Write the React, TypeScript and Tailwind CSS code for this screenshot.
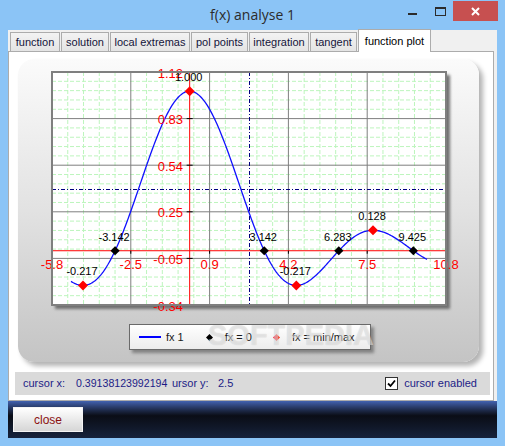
import React from "react";

// plot geometry in page coordinates (svg uses a viewBox offset to the card)
const X0 = -5.8;
const X1 = 10.8;
const Y0 = -0.34;
const Y1 = 1.12;
const L = 52;
const T = 72;
const W = 394;
const H = 233;

const px = (x: number) => L + ((x - X0) / (X1 - X0)) * W;
const py = (y: number) => T + ((Y1 - y) / (Y1 - Y0)) * H;
const sinc = (x: number) => (x === 0 ? 1 : Math.sin(x) / x);

const xLabels = ["-5.8", "-2.5", "0.9", "4.2", "7.5", "10.8"];
const yLabels = ["1.12", "0.83", "0.54", "0.25", "-0.05", "-0.34"];

const zeros = [
  { x: -Math.PI, label: "-3.142" },
  { x: Math.PI, label: "3.142" },
  { x: 2 * Math.PI, label: "6.283" },
  { x: 3 * Math.PI, label: "9.425" },
];
const extremes = [
  { x: -4.4934, label: "-0.217" },
  { x: 0, label: "1.000" },
  { x: 4.4934, label: "-0.217" },
  { x: 7.7253, label: "0.128" },
];

const tabs = [
  { name: "function", w: 50 },
  { name: "solution", w: 48 },
  { name: "local extremas", w: 80 },
  { name: "pol points", w: 57 },
  { name: "integration", w: 60 },
  { name: "tangent", w: 47 },
];

function diamond(cx: number, cy: number, r: number) {
  return `${cx},${cy - r} ${cx + r},${cy} ${cx},${cy + r} ${cx - r},${cy}`;
}

function Chart() {
  const curve: string[] = [];
  for (let x = -5; x <= 10.0001; x += 0.05) {
    curve.push(`${px(x).toFixed(2)},${py(sinc(x)).toFixed(2)}`);
  }
  const minor = Array.from({ length: 24 }, (_, i) => i + 1).filter((i) => i % 5 !== 0);
  const major = [0, 1, 2, 3, 4, 5];
  const ax = px(0);
  const ay = py(0);

  return (
    <svg width={461} height={261} viewBox="18 59 461 261" className="block">
      <defs>
        <filter id="sh" x="-5%" y="-5%" width="115%" height="115%">
          <feGaussianBlur stdDeviation="1.4" />
        </filter>
      </defs>
      <rect x={L + 3} y={T + 3} width={W + 1} height={H + 1} fill="#6e6e6e" filter="url(#sh)" />
      <rect x={L} y={T} width={W} height={H} fill="#ffffff" />

      {minor.map((i) => (
        <line key={"mv" + i} x1={L + (i * W) / 25} y1={T} x2={L + (i * W) / 25} y2={T + H} stroke="#bdf5bd" strokeDasharray="4 2" />
      ))}
      {minor.map((i) => (
        <line key={"mh" + i} x1={L} y1={T + (i * H) / 25} x2={L + W} y2={T + (i * H) / 25} stroke="#bdf5bd" strokeDasharray="4 2" />
      ))}
      {major.map((i) => (
        <line key={"Mv" + i} x1={L + (i * W) / 5} y1={T} x2={L + (i * W) / 5} y2={T + H} stroke="#7f7f7f" />
      ))}
      {major.map((i) => (
        <line key={"Mh" + i} x1={L} y1={T + (i * H) / 5} x2={L + W} y2={T + (i * H) / 5} stroke="#7f7f7f" />
      ))}

      {/* cursor */}
      <line x1={L} y1={189.5} x2={L + W} y2={189.5} stroke="#000080" strokeDasharray="4 2 1 2" />
      <line x1={249.5} y1={T} x2={249.5} y2={T + H} stroke="#000080" strokeDasharray="4 2 1 2" />

      {/* axes */}
      <line x1={ax} y1={T} x2={ax} y2={T + H} stroke="#ff0000" />
      <line x1={L} y1={ay} x2={L + W} y2={ay} stroke="#ff0000" />
      {major.map((i) => (
        <line key={"ty" + i} x1={ax - 3} y1={T + (i * H) / 5} x2={ax + 3} y2={T + (i * H) / 5} stroke="#000" />
      ))}
      {major.map((i) => (
        <line key={"tx" + i} x1={L + (i * W) / 5} y1={ay} x2={L + (i * W) / 5} y2={ay + 3} stroke="#000" />
      ))}

      <polyline points={curve.join(" ")} fill="none" stroke="#1010ff" strokeWidth={1.3} />

      {zeros.map((z) => (
        <polygon key={z.label} points={diamond(px(z.x), py(0), 4.6)} fill="#000" />
      ))}
      {extremes.map((e, i) => (
        <polygon key={"e" + i} points={diamond(px(e.x), py(sinc(e.x)), 5)} fill="#ff0000" />
      ))}

      {/* axis labels */}
      {yLabels.map((l, i) => (
        <text key={"yl" + i} x={183} y={T + (i * H) / 5 + 5.5} textAnchor="end" fontSize={13} fill="#ff0000">
          {l}
        </text>
      ))}
      {xLabels.map((l, i) => (
        <text key={"xl" + i} x={L + (i * W) / 5} y={269} textAnchor="middle" fontSize={13} fill="#ff0000">
          {l}
        </text>
      ))}

      {/* point labels */}
      {zeros.map((z) => (
        <text key={"zl" + z.label} x={px(z.x) - 1} y={py(0) - 10} textAnchor="middle" fontSize={11} fill="#000">
          {z.label}
        </text>
      ))}
      {extremes.map((e, i) => (
        <text key={"el" + i} x={px(e.x) - 1} y={py(sinc(e.x)) - 10} textAnchor="middle" fontSize={11} fill="#000">
          {e.label}
        </text>
      ))}

      <rect x={L} y={T} width={W} height={H} fill="none" stroke="#7f7f7f" strokeWidth={2} />
    </svg>
  );
}

function Legend() {
  return (
    <div className="ml-[111px] mt-[4px] flex h-[26px] w-[242px] items-center border border-[#6a6a6a] bg-gradient-to-b from-[#ffffff] to-[#ececec] text-[11px] text-[#1a1a1a] shadow-[3px_3px_3px_rgba(0,0,0,0.35)]">
      <div className="ml-[9px] h-[2px] w-[22px] bg-[#0000ff]" />
      <span className="ml-[5px]">fx 1</span>
      <svg width={7} height={7} className="ml-[22px]">
        <polygon points="3.5,0 7,3.5 3.5,7 0,3.5" fill="#000" />
      </svg>
      <span className="ml-[12px]">fx = 0</span>
      <svg width={7} height={7} className="ml-[21px]">
        <polygon points="3.5,0 7,3.5 3.5,7 0,3.5" fill="#ff2020" />
      </svg>
      <span className="ml-[12px]">fx = min/max</span>
    </div>
  );
}

export default function App() {
  return (
    <div className="flex h-[446px] w-[505px] flex-col overflow-hidden bg-[#8bc4f6] font-['Liberation_Sans',Arial,sans-serif]">
      {/* title bar */}
      <div className="grid h-[30px] grid-cols-[1fr_auto_1fr]">
        <div />
        <div className="flex items-center pb-[1px] font-['Open_Sans',sans-serif] text-[14px] text-[#2b2b2b]">f(x) analyse 1</div>
        <div className="flex items-start justify-end pr-[7px]">
          <div className="mr-[18px] mt-[13px] h-[2px] w-[9px] bg-[#2b2b2b]" />
          <div className="mr-[7px] mt-[7px] h-[9px] w-[11px] border border-t-2 border-[#2b2b2b]" />
          <div className="mt-[1px] flex h-[20px] w-[45px] items-center justify-center bg-[#c75050]">
            <svg width={9} height={9} viewBox="0 0 9 9">
              <path d="M1 1L8 8M8 1L1 8" stroke="#fff" strokeWidth={2} />
            </svg>
          </div>
        </div>
      </div>

      {/* client area */}
      <div className="ml-[8px] flex w-[489px] flex-col bg-[#f0f0f0]">
        {/* tabs */}
        <div className="flex h-[21px] items-end pl-[2px] text-[11px] text-[#14143a]">
          {tabs.map((t) => (
            <div
              key={t.name}
              style={{ width: t.w }}
              className="mr-[1px] flex h-[19px] shrink-0 items-center justify-center border border-b-0 border-[#acacac] bg-gradient-to-b from-[#f3f3f3] to-[#e4e4e4]"
            >
              {t.name}
            </div>
          ))}
          <div className="relative z-10 -mb-px flex h-[23px] w-[73px] shrink-0 items-start justify-center border border-b-0 border-[#acacac] bg-white pt-[3px] text-black">
            function plot
          </div>
        </div>

        {/* tab panel */}
        <div className="flex h-[350px] w-[486px] flex-col border border-[#acacac] bg-white">
          <div className="relative ml-[9px] mt-[7px] h-[303px] w-[461px] rounded-[16px] bg-gradient-to-b from-[#fbfbfb] via-[#e2e2e2] to-[#c4c4c4] shadow-[4px_4px_5px_rgba(0,0,0,0.3)]">
            <Chart />
            <Legend />
            <div className="pointer-events-none absolute left-[190px] top-[262px] text-[29px] font-bold leading-none text-[rgba(245,245,245,0.55)] [text-shadow:0_0_1px_rgba(0,0,0,0.18)]">
              SOFTPEDIA
            </div>
          </div>

          <div className="ml-[6px] mt-[10px] flex h-[23px] w-[475px] items-center bg-[#dadada] pl-[8px] pr-[13px] text-[11px] text-[#1c1c86]">
            <span className="w-[53px] shrink-0">cursor x:</span>
            <span className="w-[96px] shrink-0 text-[10.6px]">0.39138123992194</span>
            <span className="w-[46px] shrink-0">ursor y:</span>
            <span>2.5</span>
            <div className="ml-auto flex items-center">
              <div className="flex h-[13px] w-[13px] items-center justify-center border border-[#333] bg-white">
                <svg width={9} height={9} viewBox="0 0 9 9">
                  <path d="M1 4.5L3.5 7L8 1.5" fill="none" stroke="#000" strokeWidth={1.8} />
                </svg>
              </div>
              <span className="ml-[6px]">cursor enabled</span>
            </div>
          </div>
        </div>

        {/* bottom bar */}
        <div className="h-[37px] w-[489px] bg-gradient-to-b from-[#4262b0] via-[#0a0d16] via-40% to-[#16223c] pl-[5px] pt-[6px]">
          <div className="flex h-[25px] w-[70px] items-center justify-center border border-[#f4f4f4] bg-gradient-to-b from-[#ffffff] to-[#d6d6d6] text-[12px] text-[#8b1010]">
            close
          </div>
        </div>
      </div>
      <div className="h-[8px]" />
    </div>
  );
}
